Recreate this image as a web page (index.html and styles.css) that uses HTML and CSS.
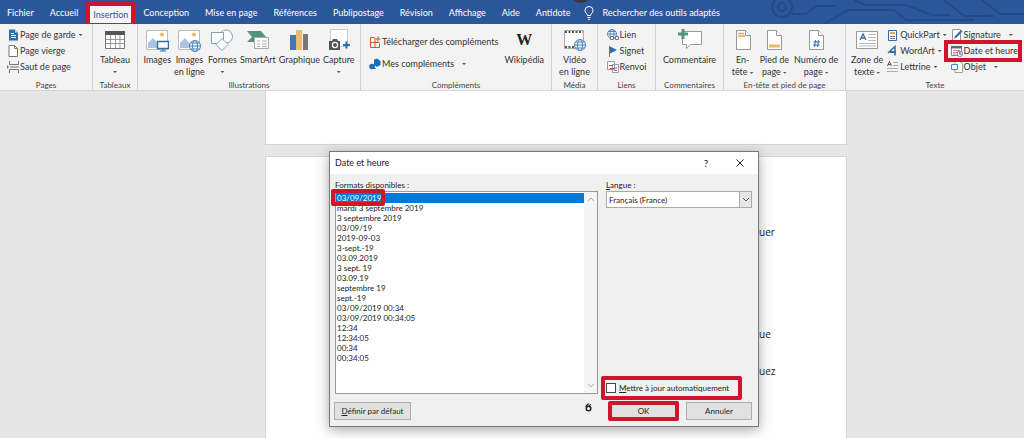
FILE: index.html
```html
<!DOCTYPE html>
<html lang="fr">
<head>
<meta charset="utf-8">
<title>Date et heure</title>
<link rel="stylesheet" href="styles.css">
</head>
<body>
<header class="tabs">
  <svg class="circuit" viewBox="0 0 264 24" fill="none" stroke="#234a86" stroke-width="2" aria-hidden="true">
    <circle cx="22" cy="7" r="10"/><circle cx="22" cy="7" r="4"/>
    <path d="M64 24l24-14h46l12 10h68M94 0l12 5h40l26 10h18M184 0l20 16h30M222 0l18 14h24M32 14h14l10-8h20"/>
  </svg>
  <span class="camera"></span>
  <nav class="tab-list">
    <button class="tab">Fichier</button>
    <button class="tab">Accueil</button>
    <button class="tab active">Insertion</button>
    <button class="tab">Conception</button>
    <button class="tab">Mise en page</button>
    <button class="tab">Références</button>
    <button class="tab">Publipostage</button>
    <button class="tab">Révision</button>
    <button class="tab">Affichage</button>
    <button class="tab">Aide</button>
    <button class="tab">Antidote</button>
    <button class="tab search"><svg width="10" height="14" viewBox="0 0 10 14" fill="none" stroke="#fff"><path d="M3.5 9.500C3.500 7.500 1 7 1 4.500a4 4 0 0 1 8 0C9 7 6.500 7.500 6.500 9.500zM3.500 11.500h3M4 13.300h2"/></svg>Rechercher des outils adaptés</button>
  </nav>
</header>

<section class="ribbon">
  <div class="group pages">
    <div class="body">
      <div class="stack">
        <button class="small"><svg class="ic" viewBox="0 0 12 12"><path d="M2 .5h6l3 3v8H2z" fill="#2f6ea8"/><path d="M8 .5v3h3z" fill="#b9d3ea"/><path d="M4 4.500h3M4 6.500h5M4 8.500h5" stroke="#fff"/></svg>Page de garde<i class="caret"></i></button>
        <button class="small"><svg class="ic" viewBox="0 0 12 12" fill="#fff" stroke="#777"><path d="M2 .5h5.500l3 3v8H2z"/><path d="M7.500.5v3h3" fill="none"/></svg>Page vierge</button>
        <button class="small"><svg class="ic" viewBox="0 0 12 12" fill="none" stroke="#777"><path d="M2.500 0v3.500h9V0M2.500 12V8.500h9V12M3 6h9"/><path d="M0 4l2 2-2 2z" fill="#777" stroke="none"/></svg>Saut de page</button>
      </div>
    </div>
    <h2>Pages</h2>
  </div>

  <div class="group tableaux">
    <div class="body">
      <button class="large"><svg class="big" viewBox="0 0 24 24"><path d="M2.500 3.500h19v17h-19z" fill="#fff" stroke="#777"/><path d="M2 3h20v4H2z" fill="#555"/><path d="M3 11.500h18M3 15.500h18M7.500 7v13M12.500 7v13M17 7v13" stroke="#999"/></svg>Tableau<i class="caret"></i></button>
    </div>
    <h2>Tableaux</h2>
  </div>

  <div class="group illustrations">
    <div class="body">
      <button class="large"><svg class="big" viewBox="0 0 24 24"><path d="M1.500 2.500h21v19h-21z" fill="#fff" stroke="#bbb"/><path d="M3 20v-5l5-5 5 6v4z" fill="#a9c4dd"/><circle cx="17" cy="6.500" r="2" fill="#eab765"/><path d="M12.500 13.500h11v7h-11z" fill="#fff" stroke="#2f6ea8" stroke-width="1.400"/><path d="M15 23h6M18 21v2" stroke="#2f6ea8"/></svg>Images</button>
      <button class="large"><svg class="big" viewBox="0 0 24 24"><path d="M1.500 2.500h21v19h-21z" fill="#fff" stroke="#bbb"/><path d="M3 20v-5l5-5 5 6v4z" fill="#a9c4dd"/><circle cx="17" cy="6.500" r="2" fill="#eab765"/><g fill="#eef5fc" stroke="#4b86bd"><circle cx="18" cy="18" r="5.500"/><ellipse cx="18" cy="18" rx="2.500" ry="5.500"/><path d="M12.500 18h11M13.500 15h9M13.500 21h9"/></g></svg>Images<span>en ligne</span></button>
      <button class="large"><svg class="big" viewBox="0 0 24 24" fill="#fff" stroke="#7d9fbd"><circle cx="16" cy="8.500" r="6.500"/><path d="M1.500 4.500h12v11h-12z"/><path d="M12 10.500l6 6-6 6-6-6z"/></svg>Formes<i class="caret"></i></button>
      <button class="large"><svg class="big" viewBox="0 0 24 24"><path d="M1 3h14l5 6-5 5H1l5-5z" fill="#549476"/><path d="M8.500 9.500h14v11h-14z" fill="#fff" stroke="#aaa"/><path d="M11 13h3M11 16h3M11 18.500h3M16 13h5M16 16h5M16 18.500h5" stroke="#aaa"/></svg>SmartArt</button>
      <button class="large"><svg class="big" viewBox="0 0 24 24"><path d="M3 7h6v15H3z" fill="#3f78b0"/><path d="M9 2h6v20H9z" fill="#e8bc72"/><path d="M16 6h5v16h-5z" fill="#777"/></svg>Graphique</button>
      <button class="large"><svg class="big" viewBox="0 0 24 24"><path d="M3.500 1.500h17v17h-17z" fill="#fff" stroke="#ccc"/><path d="M2 13h3l1-2h4l1 2h2v9H2z" fill="#555"/><circle cx="8" cy="17" r="2.600" fill="#555" stroke="#fff" stroke-width="1.200"/><path d="M16 17h7M19.500 13.500v7" stroke="#2f6ea8" stroke-width="2"/></svg>Capture<i class="caret"></i></button>
    </div>
    <h2>Illustrations</h2>
  </div>

  <div class="group complements">
    <div class="body">
      <div class="stack addins">
        <button class="small"><svg class="ic" viewBox="0 0 12 12" fill="none" stroke="#d2532b"><path d="M5.500 1.500h-4v10h9v-4M1.500 6.500h9M6 2v9M9 .5v5M6.500 3h5"/></svg>Télécharger des compléments</button>
        <button class="small"><svg class="ic" viewBox="0 0 12 12" fill="#1c6fb5"><path d="M5 1.500l3-1 3.500 2.500v4L8 9 5 7z"/><circle cx="3" cy="8.500" r="2.800"/><path d="M2 11h5l-2-3z"/></svg>Mes compléments<i class="caret apart"></i></button>
      </div>
      <button class="large wiki"><b class="big wiki-w">W</b>Wikipédia</button>
    </div>
    <h2>Compléments</h2>
  </div>

  <div class="group media">
    <div class="body">
      <button class="large"><svg class="big" viewBox="0 0 24 24"><path d="M2.500 2.500h19v18h-19z" fill="#fff" stroke="#aaa"/><path d="M3 4h18M3 19h10" stroke="#555" stroke-width="2" stroke-dasharray="2 1.500"/><g fill="#eef5fc" stroke="#4b86bd"><circle cx="18" cy="17" r="5.500"/><ellipse cx="18" cy="17" rx="2.500" ry="5.500"/><path d="M12.500 17h11M13.500 14h9M13.500 20h9"/></g></svg>Vidéo<span>en ligne</span></button>
    </div>
    <h2>Média</h2>
  </div>

  <div class="group liens">
    <div class="body">
      <div class="stack">
        <button class="small"><svg class="ic" viewBox="0 0 12 12" fill="none" stroke="#5b88b3"><circle cx="5" cy="5" r="4.500"/><ellipse cx="5" cy="5" rx="2" ry="4.500"/><path d="M.5 5h9M1 2.500h8"/><path d="M3.500 7.500h3v3h-3zM8.500 7.500h3v3h-3zM6 9h3" fill="#fff" stroke="#777"/></svg>Lien</button>
        <button class="small"><svg class="ic" viewBox="0 0 12 12"><path d="M3 1.500l7 3.500-7 3.500z" fill="#2f6ea8"/><path d="M2.500 1v11" stroke="#777"/></svg>Signet</button>
        <button class="small"><svg class="ic" viewBox="0 0 12 12" fill="#fff"><path d="M.5.5h7v8h-7zM5.500 3.500h6v8h-6z" stroke="#999"/><path d="M2 4.500h4M3 7.500h4" stroke="#c8442f"/><path d="M7 7h3M7 9.500h3" stroke="#8d6b9c"/></svg>Renvoi</button>
      </div>
    </div>
    <h2>Liens</h2>
  </div>

  <div class="group commentaires">
    <div class="body">
      <button class="large"><svg class="big" viewBox="0 0 24 24"><path d="M4.500 3.500h19v13h-11l-4 4v-4h-4z" fill="#fff" stroke="#999"/><path d="M0 6h10M5 1v10" stroke="#549476" stroke-width="3"/></svg>Commentaire</button>
    </div>
    <h2>Commentaires</h2>
  </div>

  <div class="group entete">
    <div class="body">
      <button class="large"><svg class="big" viewBox="0 0 24 24" fill="#fff"><path d="M5.500 2.500h9l5 5v14h-14z" stroke="#999"/><path d="M14.500 2.500v5h5" stroke="#999"/><path d="M7 5.500h6M7 8h7" stroke="#e8a94c" stroke-width="1.500"/></svg>En-<span>tête<i class="caret"></i></span></button>
      <button class="large"><svg class="big" viewBox="0 0 24 24" fill="#fff"><path d="M5.500 2.500h9l5 5v14h-14z" stroke="#999"/><path d="M14.500 2.500v5h5" stroke="#999"/><path d="M7 18h11" stroke="#e8b968" stroke-width="3"/></svg>Pied de<span>page<i class="caret"></i></span></button>
      <button class="large"><svg class="big" viewBox="0 0 24 24" fill="#fff"><path d="M5.500 2.500h9l5 5v14h-14z" stroke="#999"/><path d="M14.500 2.500v5h5" stroke="#999"/><path d="M11.500 12l-1 7M14.500 12l-1 7M9.500 14h6.500M9 17h6.500" stroke="#2f6ea8"/></svg>Numéro de<span>page<i class="caret"></i></span></button>
    </div>
    <h2>En-tête et pied de page</h2>
  </div>

  <div class="group texte">
    <div class="body">
      <button class="large"><svg class="big" viewBox="0 0 24 24"><path d="M1.500 3.500h21v17h-21z" fill="#fff" stroke="#999"/><path d="M5 12l3-6 3 6M6 10h4" fill="none" stroke="#2f6ea8" stroke-width="1.300"/><path d="M13 6.500h8M13 9.500h8M13 12.500h8M4 15.500h17M4 18h17" stroke="#bbb"/></svg>Zone de<span>texte<i class="caret"></i></span></button>
      <div class="stack">
        <button class="small"><svg class="ic" viewBox="0 0 12 12"><path d="M1.500 1.500h8v10h-8z" fill="#fff" stroke="#2f6ea8"/><path d="M3 4h5" stroke="#e8a94c" stroke-width="2"/><path d="M3 7.500h5M3 9.500h5" stroke="#777"/></svg>QuickPart<i class="caret"></i></button>
        <button class="small"><svg class="ic" viewBox="0 0 12 12" fill="none" stroke="#2f6ea8"><path d="M1 8l7-6.500v9" stroke-width="1.500"/><path d="M3 7h6" stroke-width="2"/></svg>WordArt<i class="caret"></i></button>
        <button class="small"><svg class="ic" viewBox="0 0 12 12" fill="none"><path d="M.5 5L2.500.5l2 4.500M1 3.500h3" stroke="#555"/><path d="M6 1.500h5M6 4.500h5M0 7.500h11M0 10.500h11" stroke="#aaa"/></svg>Lettrine<i class="caret"></i></button>
      </div>
      <div class="stack">
        <button class="small"><svg class="ic" viewBox="0 0 12 12"><path d="M1.500.5h8v11h-8z" fill="#fff" stroke="#999"/><path d="M3 10l1-3 6-6 1.500 1.500-6 6z" fill="#2f6ea8"/></svg>Signature<i class="caret apart"></i></button>
        <button class="small marked"><svg class="ic" viewBox="0 0 12 12"><path d="M.5 1.500h10v9H.5z" fill="#fff" stroke="#888"/><path d="M0 1h11v2.500H0z" fill="#666"/><path d="M2 5.500h7M2 7.500h4M2 9h3" stroke="#c78a80"/><circle cx="8.800" cy="8.800" r="2.700" fill="#fff" stroke="#5b88b3"/><path d="M8.800 7v2h1.500" fill="none" stroke="#555"/></svg>Date et heure</button>
        <button class="small"><svg class="ic" viewBox="0 0 12 12" fill="#fff"><path d="M4 .5h5l2.500 2.500v8.500H4z" stroke="#999"/><path d="M.5 3.500h6v5h-6z" stroke="#4b86bd"/></svg>Objet<i class="caret apart"></i></button>
      </div>
    </div>
    <h2>Texte</h2>
  </div>
</section>

<main class="workspace">
  <article class="sheet first"></article>
  <article class="sheet second-page">
    <p>quer</p>
    <p class="later">que</p>
    <p class="last">quez</p>
  </article>
</main>

<div class="dialog" role="dialog" aria-labelledby="dialog-title">
  <div class="titlebar">
    <h1 id="dialog-title">Date et heure</h1>
    <button class="win" aria-label="Aide">?</button>
    <button class="win" aria-label="Fermer"><svg width="8" height="8" viewBox="0 0 8 8" stroke="#222"><path d="M.5.5l7 7M7.500.5l-7 7"/></svg></button>
  </div>
  <div class="content">
    <div class="formats">
      <span class="label" id="formats-label"><u>F</u>ormats disponibles :</span>
      <div class="listbox">
        <ul role="listbox" aria-labelledby="formats-label">
          <li role="option" aria-selected="true" class="selected">03/09/2019</li>
          <li role="option">mardi 3 septembre 2019</li>
          <li role="option">3 septembre 2019</li>
          <li role="option">03/09/19</li>
          <li role="option">2019-09-03</li>
          <li role="option">3-sept.-19</li>
          <li role="option">03.09.2019</li>
          <li role="option">3 sept. 19</li>
          <li role="option">03.09.19</li>
          <li role="option">septembre 19</li>
          <li role="option">sept.-19</li>
          <li role="option">03/09/2019 00:34</li>
          <li role="option">03/09/2019 00:34:05</li>
          <li role="option">12:34</li>
          <li role="option">12:34:05</li>
          <li role="option">00:34</li>
          <li role="option">00:34:05</li>
        </ul>
        <div class="scroll">
          <svg width="8" height="5" viewBox="0 0 8 5" fill="none" stroke="#b9a493"><path d="M1 4l3-3 3 3"/></svg>
          <svg width="8" height="5" viewBox="0 0 8 5" fill="none" stroke="#aaa"><path d="M1 1l3 3 3-3"/></svg>
        </div>
      </div>
    </div>
    <div class="options">
      <label class="label" for="langue"><u>L</u>angue :</label>
      <div class="combo">
        <select id="langue"><option>Français (France)</option></select>
        <span class="arrow"><svg width="8" height="5" viewBox="0 0 8 5" fill="none" stroke="#555"><path d="M1 1l3 3 3-3"/></svg></span>
      </div>
      <div class="auto"><input type="checkbox" id="auto"><label for="auto"><u>M</u>ettre à jour automatiquement</label></div>
    </div>
  </div>
  <div class="actions">
    <button class="push default"><u>D</u>éfinir par défaut</button>
    <svg class="flame" width="9" height="9" viewBox="0 0 9 9" fill="none" stroke="#222"><circle cx="4.500" cy="5.500" r="2.300" stroke-width="1.500"/><path d="M2 4c0-2 2-2 2.500-3.500M5 2.500L7 1.500" stroke-width="1.300"/></svg>
    <button class="push ok">OK</button>
    <button class="push cancel">Annuler</button>
  </div>
</div>
</body>
</html>
```
FILE: styles.css
```css
*, *::before, *::after { box-sizing: border-box; }

body {
  margin: 0;
  min-height: 100vh;
  display: flex;
  flex-direction: column;
  position: relative;
  overflow: hidden;
  background: #e6e6e6;
  color: #333;
  font: 9px/12px Lato, "Open Sans", sans-serif;
}

button {
  margin: 0;
  padding: 0;
  border: 0;
  background: none;
  color: inherit;
  font: inherit;
  white-space: nowrap;
}

h1, h2, p, ul { margin: 0; padding: 0; font-size: inherit; font-weight: 400; }
ul { list-style: none; }

/* Tab strip */
.tabs { position: relative; height: 24px; background: #2b579a; color: #fff; }
.circuit { position: absolute; top: 0; right: 0; width: 264px; height: 24px; }
.camera {
  position: absolute;
  top: -16px;
  left: 571px;
  width: 20px;
  height: 19px;
  border-radius: 50%;
  background: #3a3a3d;
}
.tab-list { position: relative; display: flex; height: 24px; }
.tab { padding: 2px 8px 0; }
.tab:first-child { padding-left: 7px; }
.tab.active {
  margin: 2px 0 0;
  padding: 0 3px;
  border: 4px solid #d0142c;
  border-bottom-width: 1px;
  background: #f7f5f8;
  color: #2b579a;
}
.search { display: flex; align-items: center; gap: 8px; padding-left: 6px; }

/* Ribbon */
.ribbon {
  display: flex;
  height: 67px;
  background: #f3f3f3;
  border-bottom: 1px solid #d5d5d5;
}
.group {
  flex: none;
  display: flex;
  flex-direction: column;
  justify-content: space-between;
  padding-top: 3px;
  border-right: 1px solid #d0d0d0;
}
.group h2 { font-size: 8px; line-height: 10px; text-align: center; color: #444; }
.body { display: flex; justify-content: center; align-items: flex-start; }
.stack { display: flex; flex-direction: column; align-items: flex-start; }
.small { display: flex; align-items: center; gap: 1px; height: 16px; }
.large { display: flex; flex-direction: column; align-items: center; }
.ic { flex: none; width: 12px; height: 12px; }
.big { display: block; flex: none; width: 24px; height: 24px; margin: 1px 0 2px; }
.caret {
  display: inline-block;
  width: 4px;
  height: 2px;
  margin-left: 2px;
  background: #555;
  clip-path: polygon(0 0, 100% 0, 50% 100%);
  vertical-align: middle;
}
.large > .caret { margin: 5px 0 0; }
.caret.apart { margin-left: 7px; }

.pages { width: 93px; }
.pages .body { justify-content: flex-start; padding-left: 7px; }
.tableaux { width: 45px; }
.illustrations { width: 223px; }
.illustrations .body { gap: 3px; }
.complements { width: 191px; }
.complements .body { justify-content: flex-start; padding-left: 8px; gap: 6px; }
.addins { gap: 6px; padding-top: 7px; }
.wiki-w { font: 700 16px/24px "Liberation Serif", serif; color: #222; text-align: center; }
.media { width: 46px; }
.liens { width: 58px; }
.commentaires { width: 68px; }
.entete { width: 122px; }
.entete .body { gap: 5px; }
.texte { flex: 1; border-right: 0; }
.texte .body { justify-content: flex-start; padding-left: 5px; gap: 4px; }
.marked { position: relative; }
.marked::after {
  content: "";
  position: absolute;
  inset: -3px -4px -3px -7px;
  border: 4px solid #d0142c;
}

/* Document */
.workspace { flex: 1; display: flex; flex-direction: column; gap: 11px; padding: 0 177px 0 265px; }
.sheet { background: #fff; border: 1px solid #d4d4d4; }
.first { height: 54px; border-top: 0; }
.second-page {
  flex: 1;
  border-bottom: 0;
  padding: 69px 0 0 487px;
  font-family: "Open Sans", sans-serif;
  font-size: 10px;
  color: #222;
}
.later { margin-top: 90px; }
.last { margin-top: 25px; }

/* Dialog */
.dialog {
  position: absolute;
  top: 151px;
  left: 329px;
  width: 430px;
  border: 1px solid #777;
  background: #f0f0f0;
  box-shadow: 0 3px 12px rgba(0, 0, 0, .35);
  color: #222;
  font-size: 8px;
  line-height: 10px;
}
.titlebar { display: flex; align-items: center; height: 22px; padding: 0 1px 0 5px; background: #fff; }
.titlebar h1 { flex: 1; font-size: 9px; }
.win { width: 34px; height: 20px; font-size: 10px; }
.content { display: flex; gap: 8px; padding: 6px 6px 0 5px; }
.formats { flex: 1; }
.label { display: block; height: 11px; }
.listbox { display: flex; min-height: 203px; border: 1px solid #999; background: #fff; }
.listbox ul { flex: 1; padding-top: 1px; }
.listbox li { padding-left: 1px; }
.selected { position: relative; background: #0078d7; color: #fff; }
.selected::after {
  content: "";
  position: absolute;
  top: -4px;
  left: -5px;
  width: 54px;
  height: 17px;
  border: 4px solid #d0142c;
  border-radius: 2px;
}
.scroll {
  display: flex;
  flex-direction: column;
  align-items: center;
  justify-content: space-between;
  width: 13px;
  padding: 5px 0;
  background: #f5f5f5;
}
.options { display: flex; flex-direction: column; width: 146px; }
.combo { display: flex; height: 17px; border: 1px solid #aaa; background: #fff; }
.combo select {
  flex: 1;
  min-width: 0;
  margin: 0;
  padding: 0 2px;
  border: 0;
  appearance: none;
  background: #fff;
  color: inherit;
  font: inherit;
}
.arrow {
  display: flex;
  align-items: center;
  justify-content: center;
  width: 12px;
  border-left: 1px solid #aaa;
  background: #e6e6e6;
}
.auto {
  display: flex;
  align-items: center;
  gap: 3px;
  height: 24px;
  margin: auto 10px -6px -5px;
  padding-left: 1px;
  border: 4px solid #d0142c;
  border-radius: 2px;
}
.auto input {
  appearance: none;
  width: 10px;
  height: 10px;
  margin: 0;
  border: 1px solid #444;
  background: #fff;
}
.actions { display: flex; align-items: center; padding: 7px 6px 5px 4px; }
.push { height: 18px; border: 1px solid #adadad; background: #e1e1e1; }
.default { width: 77px; }
.flame { margin: 0 15px 8px auto; }
.ok { width: 71px; height: 20px; border: 4px solid #d0142c; border-radius: 2px; line-height: 11px; }
.cancel { width: 66px; margin-left: 7px; }
```
